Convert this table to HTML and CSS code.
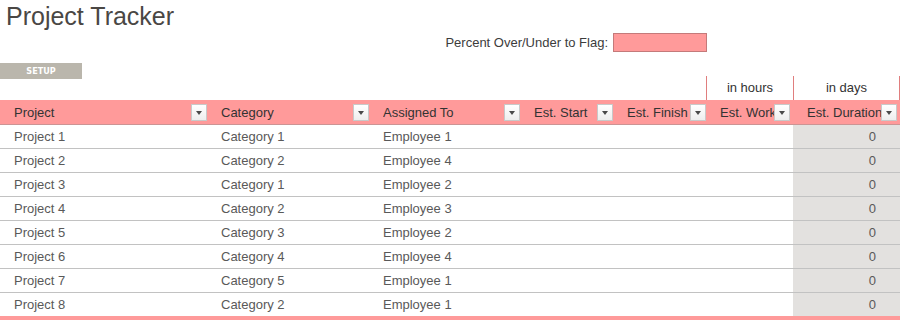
FILE: index.html
```html
<!DOCTYPE html>
<html>
<head>
<meta charset="utf-8">
<link rel="stylesheet" href="styles.css">
</head>
<body>
<h1 class="title">Project Tracker</h1>
<div class="flag-row">
  <span class="flag-label">Percent Over/Under to Flag:</span>
  <span class="flag-box"></span>
</div>
<div class="grid top">
  <div class="setup">SETUP</div>
  <div class="unit unit-hours">in hours</div>
  <div class="unit unit-days">in days</div>
</div>
<div class="grid head">
  <div class="hcell"><span class="hlabel">Project</span><span class="dd"></span></div>
  <div class="hcell"><span class="hlabel">Category</span><span class="dd"></span></div>
  <div class="hcell"><span class="hlabel">Assigned To</span><span class="dd"></span></div>
  <div class="hcell"><span class="hlabel">Est. Start</span><span class="dd"></span></div>
  <div class="hcell"><span class="hlabel">Est. Finish</span><span class="dd"></span></div>
  <div class="hcell inset"><span class="hlabel">Est. Work</span><span class="dd"></span></div>
  <div class="hcell inset"><span class="hlabel">Est. Duration</span><span class="dd"></span></div>
</div>
<div class="grid row"><div class="cell">Project 1</div><div class="cell">Category 1</div><div class="cell">Employee 1</div><div class="cell"></div><div class="cell"></div><div class="cell"></div><div class="cell num">0</div></div>
<div class="grid row"><div class="cell">Project 2</div><div class="cell">Category 2</div><div class="cell">Employee 4</div><div class="cell"></div><div class="cell"></div><div class="cell"></div><div class="cell num">0</div></div>
<div class="grid row"><div class="cell">Project 3</div><div class="cell">Category 1</div><div class="cell">Employee 2</div><div class="cell"></div><div class="cell"></div><div class="cell"></div><div class="cell num">0</div></div>
<div class="grid row"><div class="cell">Project 4</div><div class="cell">Category 2</div><div class="cell">Employee 3</div><div class="cell"></div><div class="cell"></div><div class="cell"></div><div class="cell num">0</div></div>
<div class="grid row"><div class="cell">Project 5</div><div class="cell">Category 3</div><div class="cell">Employee 2</div><div class="cell"></div><div class="cell"></div><div class="cell"></div><div class="cell num">0</div></div>
<div class="grid row"><div class="cell">Project 6</div><div class="cell">Category 4</div><div class="cell">Employee 4</div><div class="cell"></div><div class="cell"></div><div class="cell"></div><div class="cell num">0</div></div>
<div class="grid row"><div class="cell">Project 7</div><div class="cell">Category 5</div><div class="cell">Employee 1</div><div class="cell"></div><div class="cell"></div><div class="cell"></div><div class="cell num">0</div></div>
<div class="grid row last"><div class="cell">Project 8</div><div class="cell">Category 2</div><div class="cell">Employee 1</div><div class="cell"></div><div class="cell"></div><div class="cell"></div><div class="cell num">0</div></div>
</body>
</html>
```
FILE: styles.css
```css
* { box-sizing: border-box; }
body {
  margin: 0;
  background: #fff;
  font-family: "Liberation Sans", Arial, sans-serif;
  font-size: 13px;
  color: #595959;
  width: 904px;
  overflow: hidden;
}
.title {
  margin: 0;
  padding-left: 6px;
  font-size: 25px;
  font-weight: normal;
  line-height: 33px;
  height: 33px;
  color: #4a4744;
}
.flag-row {
  display: flex;
  justify-content: flex-end;
  align-items: center;
  gap: 5px;
  height: 19px;
  padding-right: 197px;
  margin-bottom: 11px;
}
.flag-label {
  color: #3c3c3c;
}
.flag-box {
  width: 94px;
  height: 19px;
  background: #ff9a9a;
  border: 1px solid #c47a7a;
}
.grid {
  display: grid;
  grid-template-columns: 207px 162px 151px 93px 93px 87px 107px;
  width: 900px;
}
.top {
  height: 37px;
}
.setup {
  grid-column: 1;
  align-self: start;
  width: 82px;
  height: 16px;
  background: #bab6ac;
  color: #fff;
  font-family: "DejaVu Sans Condensed", "Liberation Sans", sans-serif;
  font-weight: bold;
  font-size: 9px;
  line-height: 16px;
  text-align: center;
}
.unit {
  align-self: end;
  height: 24px;
  line-height: 24px;
  text-align: center;
  color: #333;
  border-left: 1px solid #e07e7e;
}
.unit-hours { grid-column: 6; }
.unit-days { grid-column: 7; border-right: 1px solid #e07e7e; }
.head {
  height: 25px;
  background: #ff9a9a;
  border-bottom: 1px solid #cc9494;
}
.hcell {
  display: flex;
  align-items: center;
  padding-left: 14px;
  min-width: 0;
  overflow: hidden;
}
.hcell.inset {
  padding-right: 3px;
}
.hlabel {
  flex: 1;
  min-width: 0;
  overflow: hidden;
  white-space: nowrap;
  color: #333;
  line-height: 24px;
  padding-top: 1px;
}
.dd {
  flex: 0 0 auto;
  width: 16px;
  height: 17px;
  margin-top: 1px;
  background: linear-gradient(#ffffff, #eeeeee);
  border: 1px solid #c9c9c9;
  position: relative;
}
.dd::after {
  content: "";
  position: absolute;
  left: 4px;
  top: 6px;
  border-left: 3.5px solid transparent;
  border-right: 3.5px solid transparent;
  border-top: 4px solid #4a4a4a;
}
.row {
  height: 24px;
  border-bottom: 1px solid #c2c2c2;
}
.row.last {
  border-bottom: 4px solid #ff9a9a;
  height: 27px;
}
.cell {
  padding-left: 14px;
  line-height: 23px;
  white-space: nowrap;
}
.cell.num {
  background: #e3e1df;
  text-align: right;
  padding-right: 24px;
}
```
